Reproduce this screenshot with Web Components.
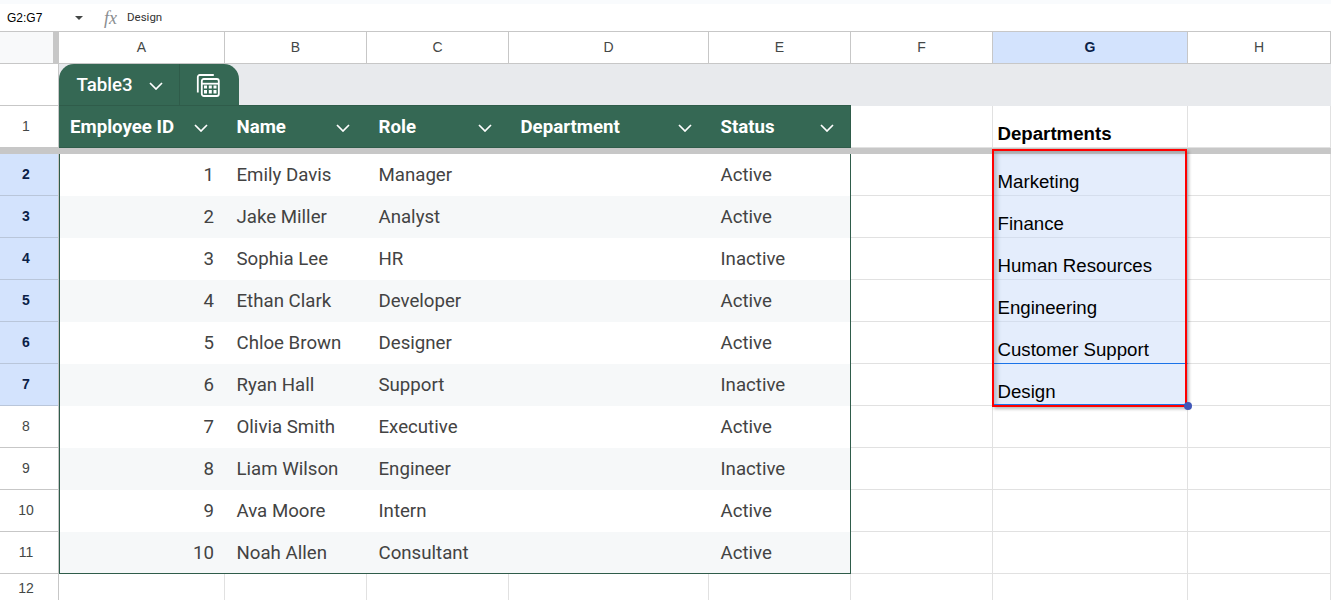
<!DOCTYPE html>
<html>
<head>
<meta charset="utf-8">
<title>Sheet</title>
<style>
html, body { margin: 0; height: 100%; overflow: hidden; background: #fff; }
body {
    --cols: 59px 166px 142px 142px 200px 142px 142px 195px 143px;
    --grid-line: #e1e1e1;
    --head-line: #c7c7c7;
    --table-line: #2f5c4a;
    --table-green: #356854;
}
</style>
</head>
<body>
<sheet-app></sheet-app>

<script>
const chevron = `<svg width="14" height="8" viewBox="0 0 14 8" fill="none" stroke="#fff" stroke-width="1.7"><path d="M1 1l6 6 6-6"/></svg>`;

class FormulaBar extends HTMLElement {
    connectedCallback() {
        const root = this.attachShadow({ mode: 'open' });
        root.innerHTML = `
<style>
:host { display: flex; align-items: center; box-sizing: border-box; height: 32px; padding-top: 4px;
    background: linear-gradient(#f9fbfd 4px, #fff 4px); border-bottom: 1px solid var(--head-line);
    font: 12px "Liberation Sans", Arial, sans-serif; color: #000; }
.name { width: 75px; padding-left: 7px; box-sizing: border-box; }
.arrow { width: 0; height: 0; border: 4px solid transparent; border-top-color: #444746; border-bottom: 0; }
.fx { margin-left: 21px; width: 23px; padding-top: 1px; font: italic 18px "Liberation Serif", serif; color: #8a8d90; }
.value { color: #333; font-family: Roboto, sans-serif; font-size: 11.5px; padding-bottom: 2px; }
</style>
<span class="name">G2:G7</span><span class="arrow"></span><span class="fx">fx</span><span class="value"><slot></slot></span>`;
    }
}

class ColHeaders extends HTMLElement {
    connectedCallback() {
        const root = this.attachShadow({ mode: 'open' });
        root.innerHTML = `
<style>
:host { display: grid; grid-template-columns: var(--cols); height: 32px; box-sizing: border-box;
    border-bottom: 1px solid var(--head-line); }
.corner { background: #f8f9fa; border-right: 6px solid var(--head-line); margin-right: 0; }
</style>
<div class="corner"></div><slot></slot>`;
    }
}

class ColHead extends HTMLElement {
    connectedCallback() {
        const root = this.attachShadow({ mode: 'open' });
        root.innerHTML = `
<style>
:host { display: flex; align-items: center; justify-content: center; box-sizing: border-box; padding-bottom: 1px;
    border-right: 1px solid var(--head-line); font: 14px "Liberation Sans", Arial, sans-serif; color: #444746; }
:host([selected]) { background: #d3e3fd; color: #0b1f48; font-weight: 700; }
</style>
<slot></slot>`;
    }
}

class TableTab extends HTMLElement {
    connectedCallback() {
        const root = this.attachShadow({ mode: 'open' });
        root.innerHTML = `
<style>
:host { display: grid; grid-template-columns: 59px 1fr; height: 42px; }
.gutter { border-right: 1px solid var(--head-line); border-bottom: 1px solid var(--head-line); }
.band { background: #e8eaed; display: flex; }
.tab { display: flex; width: 180px; height: 42px; box-sizing: border-box; background: var(--table-green);
    border-radius: 15px 15px 0 0; color: #fff; font: 500 18.67px Roboto, sans-serif; }
.name { width: 121px; box-sizing: border-box; padding-left: 17.5px; display: flex; align-items: center;
    border-right: 1px solid #2f5c4a; }
.name svg { margin-left: 16px; margin-top: 2px; }
.icon { flex: 1; display: flex; align-items: center; justify-content: center; padding-right: 3px; }
</style>
<div class="gutter"></div>
<div class="band">
    <div class="tab">
        <div class="name"><slot></slot>${chevron}</div>
        <div class="icon">
            <svg width="24" height="24" viewBox="0 0 24 24" fill="none" stroke="#fff" stroke-width="1.8">
                <path d="M1.800 19.500V4a2 2 0 0 1 2-2h14"/>
                <rect x="5.800" y="6" width="17" height="17" rx="2"/>
                <path d="M5.800 10.700h17"/>
                <path fill="#fff" stroke="none" d="M8 12.500h3v3h-3zM12.800 12.500h3v3h-3zM17.500 12.500h3v3h-3zM8 17h3v3.500h-3zM12.800 17h3v3.500h-3zM17.500 17h3v3.500h-3z"/>
            </svg>
        </div>
    </div>
</div>`;
    }
}

class SheetRow extends HTMLElement {
    connectedCallback() {
        const root = this.attachShadow({ mode: 'open' });
        root.innerHTML = `
<style>
:host { display: grid; grid-template-columns: var(--cols); height: 42px; }
:host([short]) { height: 30px; }
.num { display: flex; align-items: center; justify-content: center; box-sizing: border-box; padding: 0 6px 1px 0;
    border-right: 1px solid var(--head-line); border-bottom: 1px solid var(--head-line);
    font: 14px "Liberation Sans", Arial, sans-serif; color: #444746; }
:host([selected]) .num { background: #d3e3fd; color: #0b1f48; font-weight: 700; border-bottom-color: #b9c6da; }
</style>
<div class="num">${this.getAttribute('num')}</div><slot></slot>`;
    }
}

class SheetCell extends HTMLElement {
    connectedCallback() {
        const root = this.attachShadow({ mode: 'open' });
        root.innerHTML = `
<style>
:host { display: flex; align-items: flex-end; box-sizing: border-box; min-width: 0; white-space: nowrap;
    padding: 0 4px 2px 4.500px; border-right: 1px solid var(--grid-line); border-bottom: 1px solid var(--grid-line);
    font: 18.67px "Liberation Sans", Arial, sans-serif; color: #000; }
:host([sel]) { background: #e4edfc; border-bottom-color: #d5deed; border-right-color: transparent; }
:host([sel-line]) { border-bottom-color: #1a73e8; }
:host([bold]) { font-weight: 700; }
:host([tbl]) { align-items: center; padding: 0 11px 0 11.500px; border-right: 0; border-bottom: 0;
    font-family: Roboto, sans-serif; color: #434343; }
:host([alt]) { background: #f6f8f9; }
:host([num]) { justify-content: flex-end; }
:host([first]) { border-left: 1px solid var(--table-line); }
:host([last]) { border-right: 1px solid var(--table-line); }
:host([end]) { border-bottom: 1px solid var(--table-line); }
</style>
<slot></slot>`;
    }
}

class HeadCell extends HTMLElement {
    connectedCallback() {
        const root = this.attachShadow({ mode: 'open' });
        root.innerHTML = `
<style>
:host { display: flex; align-items: center; justify-content: space-between; box-sizing: border-box;
    padding: 0 17px 0 11.500px; background: var(--table-green); border-bottom: 1px solid var(--table-line);
    box-shadow: 0 -1px 0 var(--table-line);
    font: 700 18.67px Roboto, sans-serif; color: #fff; white-space: nowrap; }
:host([first]) { padding-left: 11px; }
:host([last]) { border-right: 1px solid var(--table-line); padding-right: 16px; }
svg { margin-top: 2px; }
</style>
<slot></slot>${chevron}`;
    }
}

class FreezeBar extends HTMLElement {
    connectedCallback() {
        const root = this.attachShadow({ mode: 'open' });
        root.innerHTML = `<style>:host { display: block; height: 6px; background: var(--head-line); }</style>`;
    }
}

// red outline + fill handle, sits over G2:G7
class RangeMark extends HTMLElement {
    connectedCallback() {
        const root = this.attachShadow({ mode: 'open' });
        root.innerHTML = `
<style>
:host { position: absolute; left: 992px; top: 149px; width: 195px; height: 258px; box-sizing: border-box;
    border: 2px solid #f00; pointer-events: none;
    box-shadow: 2px 2px 3px rgba(0,0,0,.28), inset 4px 3px 4px -1px rgba(60,70,90,.3); }
.line { position: absolute; left: 0; right: 0; bottom: 0; height: 1px; background: #1a73e8; }
.handle { position: absolute; right: -7px; bottom: -5px; width: 8px; height: 8px; border-radius: 50%; background: #4158b8; }
</style>
<div class="line"></div><div class="handle"></div>`;
    }
}

const staff = [
    ['Emily Davis', 'Manager', 'Active', 'Marketing'],
    ['Jake Miller', 'Analyst', 'Active', 'Finance'],
    ['Sophia Lee', 'HR', 'Inactive', 'Human Resources'],
    ['Ethan Clark', 'Developer', 'Active', 'Engineering'],
    ['Chloe Brown', 'Designer', 'Active', 'Customer Support'],
    ['Ryan Hall', 'Support', 'Inactive', 'Design'],
    ['Olivia Smith', 'Executive', 'Active'],
    ['Liam Wilson', 'Engineer', 'Inactive'],
    ['Ava Moore', 'Intern', 'Active'],
    ['Noah Allen', 'Consultant', 'Active'],
];

class SheetApp extends HTMLElement {
    connectedCallback() {
        const root = this.attachShadow({ mode: 'open' });
        const letters = ['A', 'B', 'C', 'D', 'E', 'F', 'G', 'H'];
        const heads = ['Employee ID', 'Name', 'Role', 'Department', 'Status'];

        let rows = '';
        staff.forEach((s, i) => {
            const n = i + 1;
            const attrs = (n % 2 == 0 ? ' alt' : '') + (n == 10 ? ' end' : '');
            const dept = s[3]
                ? `<sheet-cell sel${n == 5 ? ' sel-line' : ''}>${s[3]}</sheet-cell>`
                : `<sheet-cell></sheet-cell>`;
            rows += `
<sheet-row num="${n + 1}"${s[3] ? ' selected' : ''}>
    <sheet-cell tbl num first${attrs}>${n}</sheet-cell>
    <sheet-cell tbl${attrs}>${s[0]}</sheet-cell>
    <sheet-cell tbl${attrs}>${s[1]}</sheet-cell>
    <sheet-cell tbl${attrs}></sheet-cell>
    <sheet-cell tbl last${attrs}>${s[2]}</sheet-cell>
    <sheet-cell></sheet-cell>
    ${dept}
    <sheet-cell></sheet-cell>
</sheet-row>`;
        });

        root.innerHTML = `
<style>
:host { display: block; position: relative; width: 1331px; height: 600px; overflow: hidden; }
</style>
<formula-bar>Design</formula-bar>
<col-headers>${letters.map(l => `<col-head${l == 'G' ? ' selected' : ''}>${l}</col-head>`).join('')}</col-headers>
<table-tab>Table3</table-tab>
<sheet-row num="1">
    ${heads.map((h, i) => `<head-cell${i == 0 ? ' first' : i == 4 ? ' last' : ''}>${h}</head-cell>`).join('')}
    <sheet-cell></sheet-cell>
    <sheet-cell bold>Departments</sheet-cell>
    <sheet-cell></sheet-cell>
</sheet-row>
<freeze-bar></freeze-bar>
${rows}
<sheet-row num="12" short>
    ${letters.map(() => '<sheet-cell></sheet-cell>').join('')}
</sheet-row>
<range-mark></range-mark>`;
    }
}

customElements.define('formula-bar', FormulaBar);
customElements.define('col-headers', ColHeaders);
customElements.define('col-head', ColHead);
customElements.define('table-tab', TableTab);
customElements.define('sheet-row', SheetRow);
customElements.define('sheet-cell', SheetCell);
customElements.define('head-cell', HeadCell);
customElements.define('freeze-bar', FreezeBar);
customElements.define('range-mark', RangeMark);
customElements.define('sheet-app', SheetApp);
</script>
</body>
</html>
